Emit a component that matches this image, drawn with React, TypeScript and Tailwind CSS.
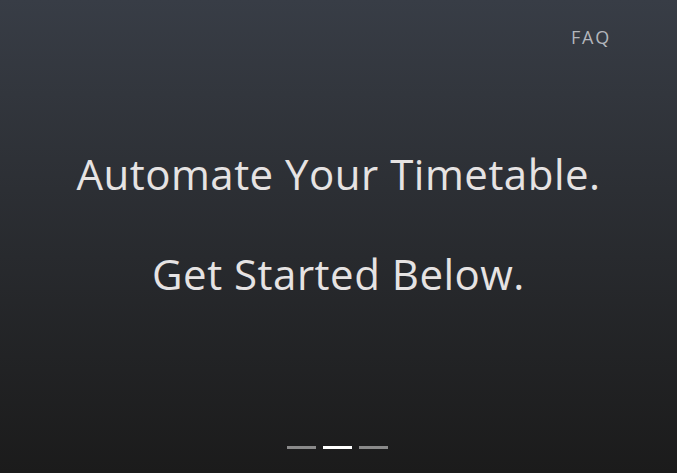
export default function App() {
  return (
    <div className="flex h-[473px] w-[677px] flex-col bg-gradient-to-b from-[#383d46] to-[#1b1b1b] font-['Open_Sans',sans-serif]">
      <div className="flex justify-end pr-[66px] pt-[24px]">
        <a className="text-[18px] font-medium tracking-[1.8px] text-[#b3b6bb]">FAQ</a>
      </div>
      <div className="flex flex-1 flex-col items-center pt-[95px] text-[#e6e3e3]">
        <h1 className="text-[42px] leading-[56px] tracking-[0.5px]">Automate Your Timetable.</h1>
        <h2 className="mt-[44px] text-[42px] leading-[56px] tracking-[0.5px]">Get Started Below.</h2>
      </div>
      <div className="flex justify-center gap-[7px] pb-[24px] pr-[2px]">
        <span className="h-[3px] w-[29px] bg-[#8a8a8a]" />
        <span className="h-[3px] w-[29px] bg-white" />
        <span className="h-[3px] w-[29px] bg-[#8a8a8a]" />
      </div>
    </div>
  )
}
